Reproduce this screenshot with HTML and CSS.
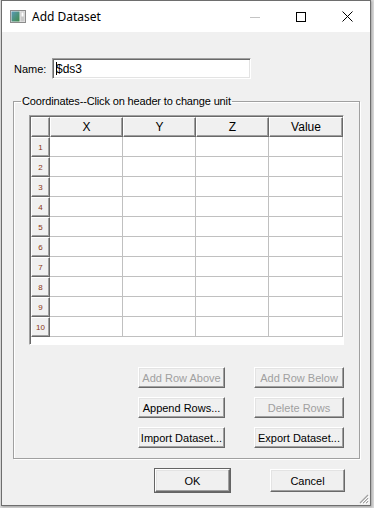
FILE: index.html
```html
<!DOCTYPE html>
<html>
<head>
<meta charset="utf-8">
<link rel="stylesheet" href="styles.css">
</head>
<body>
<div class="window">
  <div class="titlebar">
    <svg class="appicon" viewBox="0 0 16 13" width="16" height="13">
      <defs>
        <linearGradient id="g1" x1="0" y1="0" x2="1" y2="1">
          <stop offset="0" stop-color="#5a9ab8"/>
          <stop offset="1" stop-color="#3f8a4a"/>
        </linearGradient>
      </defs>
      <rect x="0.5" y="0.5" width="15" height="12" fill="#e8e8e8" stroke="#8c8c8c"/>
      <rect x="1.5" y="1.5" width="8" height="10" fill="url(#g1)"/>
      <rect x="10.5" y="1.5" width="4" height="10" fill="#c9c9c9"/>
      <rect x="11.5" y="2.5" width="2" height="4" fill="#ffffff"/>
    </svg>
    <span class="title">Add Dataset</span>
    <div class="caption">
      <span class="cb"><svg width="10" height="10" viewBox="0 0 10 10"><line x1="0" y1="5.5" x2="10" y2="5.5" stroke="#c4c4c4" stroke-width="1"/></svg></span>
      <span class="cb"><svg width="10" height="10" viewBox="0 0 10 10"><rect x="0.5" y="0.5" width="9" height="9" fill="none" stroke="#000" stroke-width="1"/></svg></span>
      <span class="cb"><svg width="11" height="11" viewBox="0 0 11 11"><path d="M0.5 0.5 L10.5 10.5 M10.5 0.5 L0.5 10.5" stroke="#000" stroke-width="1" fill="none"/></svg></span>
    </div>
  </div>

  <div class="client">
    <div class="name-row">
      <label class="name-label">Name:</label>
      <div class="input"><span class="caret"></span>$ds3</div>
    </div>

    <fieldset class="group">
      <legend>Coordinates--Click on header to change unit</legend>
      <div class="grid">
        <div class="sheet">
          <div class="hc corner"></div>
          <div class="hc">X</div>
          <div class="hc">Y</div>
          <div class="hc">Z</div>
          <div class="hc">Value</div>

          <div class="rh">1</div><div class="dc"></div><div class="dc"></div><div class="dc"></div><div class="dc"></div>
          <div class="rh">2</div><div class="dc"></div><div class="dc"></div><div class="dc"></div><div class="dc"></div>
          <div class="rh">3</div><div class="dc"></div><div class="dc"></div><div class="dc"></div><div class="dc"></div>
          <div class="rh">4</div><div class="dc"></div><div class="dc"></div><div class="dc"></div><div class="dc"></div>
          <div class="rh">5</div><div class="dc"></div><div class="dc"></div><div class="dc"></div><div class="dc"></div>
          <div class="rh">6</div><div class="dc"></div><div class="dc"></div><div class="dc"></div><div class="dc"></div>
          <div class="rh">7</div><div class="dc"></div><div class="dc"></div><div class="dc"></div><div class="dc"></div>
          <div class="rh">8</div><div class="dc"></div><div class="dc"></div><div class="dc"></div><div class="dc"></div>
          <div class="rh">9</div><div class="dc"></div><div class="dc"></div><div class="dc"></div><div class="dc"></div>
          <div class="rh">10</div><div class="dc"></div><div class="dc"></div><div class="dc"></div><div class="dc"></div>
        </div>
      </div>

      <div class="actions">
        <button class="btn disabled">Add Row Above</button>
        <button class="btn disabled">Add Row Below</button>
        <button class="btn">Append Rows...</button>
        <button class="btn disabled">Delete Rows</button>
        <button class="btn">Import Dataset...</button>
        <button class="btn">Export Dataset...</button>
      </div>
    </fieldset>

    <div class="footer">
      <button class="btn dlg default">OK</button>
      <button class="btn dlg">Cancel</button>
    </div>
  </div>

  <svg class="grip" width="11" height="11" viewBox="0 0 11 11">
    <path d="M10 2 L2 10 M10 5 L5 10 M10 8 L8 10" stroke="#a0a0a0" stroke-width="1.2" fill="none"/>
    <path d="M11 3 L3 11 M11 6 L6 11 M11 9 L9 11" stroke="#ffffff" stroke-width="1" fill="none"/>
  </svg>
</div>
</body>
</html>
```

FILE: styles.css
```css
* { box-sizing: border-box; }
html, body { margin: 0; padding: 0; }
body {
  width: 374px;
  height: 508px;
  overflow: hidden;
  background: #d9d9d9;
  font-family: "Liberation Sans", Arial, sans-serif;
  font-size: 11px;
  color: #000;
}
.window {
  margin-left: 1px;
  width: 370px;
  height: 506px;
  border: 1px solid #6e6e6e;
  background: #f0f0f0;
  display: flex;
  flex-direction: column;
  position: relative;
  box-shadow: 1px 1px 2px rgba(0,0,0,0.25);
}
.titlebar {
  height: 31px;
  flex-shrink: 0;
  background: #fff;
  display: flex;
  align-items: center;
}
.appicon { margin-left: 8px; display: block; }
.title {
  margin-left: 6px;
  font-family: "Noto Sans", "Open Sans", sans-serif;
  font-size: 12px;
  color: #000;
}
.caption { margin-left: auto; display: flex; height: 100%; }
.cb {
  width: 46px;
  display: flex;
  align-items: center;
  justify-content: center;
}
.cb svg { display: block; }

.client { flex: 1; display: flex; flex-direction: column; }

.name-row {
  margin-top: 26px;
  margin-left: 12px;
  display: flex;
  align-items: center;
}
.name-label { width: 38px; }
.input {
  width: 199px;
  height: 21px;
  background: #fff;
  border: 1px solid;
  border-color: #a0a0a0 #ffffff #ffffff #a0a0a0;
  box-shadow: inset 1px 1px 0 #696969, inset -1px -1px 0 #e3e3e3;
  padding-left: 3px;
  display: flex;
  align-items: center;
  font-size: 12px;
}
.caret {
  width: 1px;
  height: 13px;
  background: #000;
  margin-right: -1px;
}

.group {
  margin: 16px 10px 0 11px;
  padding: 7px 15px 10px 15px;
  border: 1px solid #a0a0a0;
  box-shadow: inset 1px 1px 0 #fff, 1px 1px 0 #fff;
  min-width: 0;
}
.group legend {
  padding: 0 1px;
  margin-left: -8px;
  line-height: 13px;
  letter-spacing: -0.15px;
}

.grid {
  width: 315px;
  height: 230px;
  background: #fff;
  border: 1px solid;
  border-color: #a0a0a0 #ffffff #ffffff #a0a0a0;
  box-shadow: inset 1px 1px 0 #696969;
  padding: 1px 0 0 1px;
}
.sheet {
  display: grid;
  grid-template-columns: 19px 73px 73px 73px 74px;
  grid-auto-rows: 20px;
}
.hc {
  background: #f0f0f0;
  border: 1px solid;
  border-color: #ffffff #696969 #696969 #ffffff;
  box-shadow: inset -1px -1px 0 #a0a0a0;
  display: flex;
  align-items: center;
  justify-content: center;
  font-size: 12px;
}
.rh {
  background: #f0f0f0;
  border: 1px solid;
  border-color: #ffffff #696969 #696969 #ffffff;
  box-shadow: inset -1px -1px 0 #a0a0a0;
  display: flex;
  align-items: center;
  justify-content: center;
  font-size: 8px;
  color: #8a3410;
}
.dc {
  background: #fff;
  border-right: 1px solid #c0c0c0;
  border-bottom: 1px solid #c0c0c0;
}

.actions {
  margin-top: 22px;
  display: grid;
  grid-template-columns: 87px 90px;
  column-gap: 29px;
  row-gap: 9px;
  justify-content: end;
}
.btn {
  height: 21px;
  padding: 0;
  margin: 0;
  font-family: "Liberation Sans", Arial, sans-serif;
  font-size: 11px;
  color: #000;
  background: #f0f0f0;
  border: 1px solid;
  border-color: #ffffff #696969 #696969 #ffffff;
  box-shadow: inset -1px -1px 0 #a0a0a0, inset 1px 1px 0 #e3e3e3;
  border-radius: 0;
}
.btn.disabled { color: #a0a0a0; }

.footer {
  margin-top: 10px;
  display: flex;
  justify-content: flex-end;
  gap: 40px;
  padding-right: 25px;
}
.btn.dlg { width: 75px; height: 23px; }
.btn.default { outline: 1px solid #646464; }

.grip { position: absolute; right: 1px; bottom: 1px; }
```
